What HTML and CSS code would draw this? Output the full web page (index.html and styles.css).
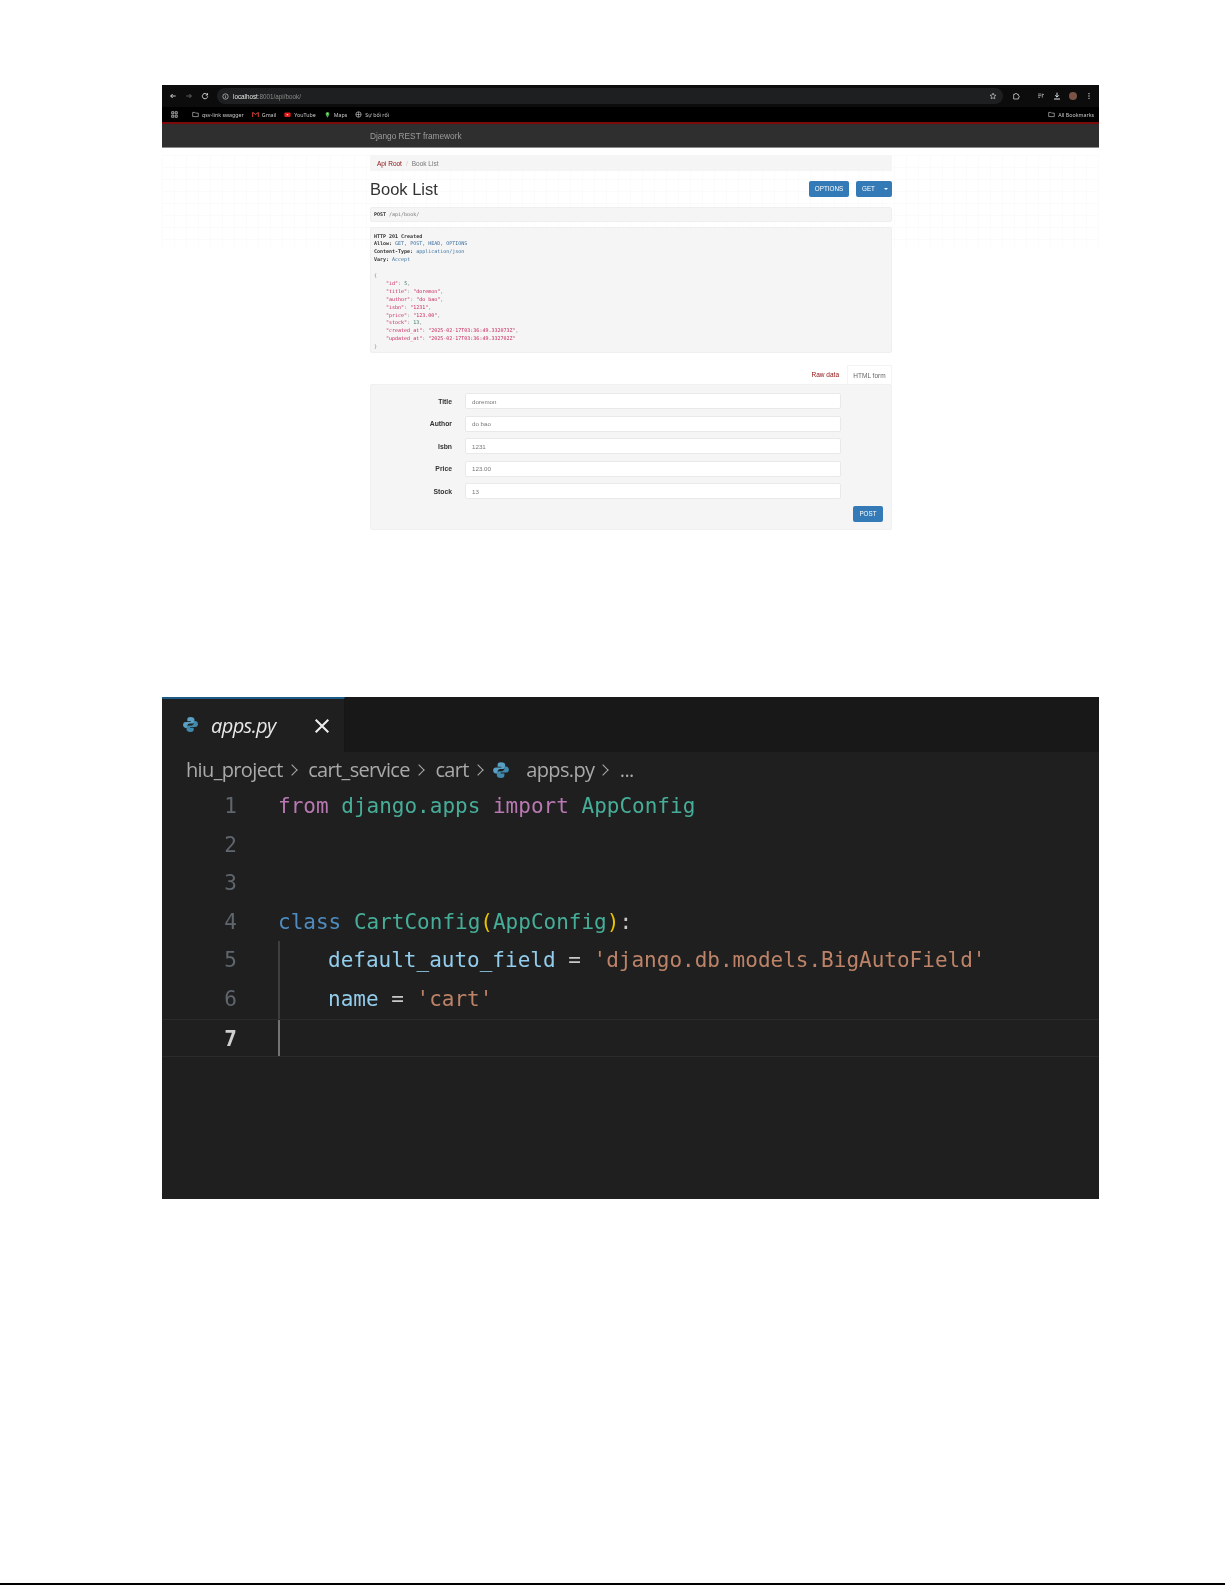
FILE: index.html
```html
<!DOCTYPE html>
<html lang="en">
<head>
<meta charset="utf-8">
<title>Book List and apps.py</title>
<link rel="stylesheet" href="styles.css">
</head>
<body>
<main class="page">
  <section class="browser">
    <div class="toolbar">
      <svg class="ti ti-first" viewBox="0 0 12 12"><path d="M10 6H2.5M5.5 3 2.5 6l3 3" fill="none" stroke="#e8e8e8" stroke-width="1.3"/></svg>
      <svg class="ti" viewBox="0 0 12 12"><path d="M2 6h7.5M6.5 3l3 3-3 3" fill="none" stroke="#6c6c6c" stroke-width="1.3"/></svg>
      <svg class="ti" viewBox="0 0 12 12"><path d="M9.5 4.2A4 4 0 1 0 10 6.5M9.8 1.8v2.8H7" fill="none" stroke="#e4e4e4" stroke-width="1.3"/></svg>
      <div class="omnibox">
        <svg class="info" viewBox="0 0 12 12"><circle cx="6" cy="6" r="4.6" fill="none" stroke="#ddd" stroke-width="1.1"/><path d="M6 5.4v3M6 3.4v1" stroke="#ddd" stroke-width="1.1"/></svg>
        <span class="host">localhost</span><span class="path">:8001/api/book/</span>
        <svg class="star" viewBox="0 0 12 12"><path d="m6 1.6 1.3 3 3.2.3-2.4 2.1.7 3.2L6 8.6l-2.8 1.6.7-3.2-2.4-2.1 3.2-.3z" fill="none" stroke="#ccc" stroke-width="1"/></svg>
      </div>
      <svg class="ti ti-ext" viewBox="0 0 12 12"><path d="M2.5 3.5h2a1.5 1.5 0 0 1 3 0h2v2a1.500 1.500 0 0 1 0 3v2h-7z" fill="none" stroke="#ddd" stroke-width="1.100"/></svg>
      <svg class="ti ti-media" viewBox="0 0 12 12"><path d="M1.500 3h5M1.500 5.500h5M1.500 8h3M8 8.500V3l2.500 1" fill="none" stroke="#bbb" stroke-width="1.100"/></svg>
      <svg class="ti" viewBox="0 0 12 12"><path d="M6 1v6.500M3.300 5 6 7.700 8.700 5M1.500 10.500h9" fill="none" stroke="#f0f0f0" stroke-width="1.400"/></svg>
      <span class="avatar"></span>
      <svg class="ti" viewBox="0 0 12 12"><circle cx="6" cy="2.500" r="1" fill="#ddd"/><circle cx="6" cy="6" r="1" fill="#ddd"/><circle cx="6" cy="9.500" r="1" fill="#ddd"/></svg>
    </div>
    <div class="bookmarks">
      <svg class="bi bi-apps" viewBox="0 0 10 10"><path d="M1 1h3v3H1zM6 1h3v3H6zM1 6h3v3H1zM6 6h3v3H6z" fill="none" stroke="#ddd" stroke-width="1"/></svg>
      <span class="bm bm-first"><svg class="bi" viewBox="0 0 10 10"><path d="M1 2h3l1 1h4v5H1z" fill="none" stroke="#ccc" stroke-width=".9"/></svg>qsv-link swagger</span>
      <span class="bm"><svg class="bi" viewBox="0 0 10 10"><path d="M1 8.500V2l4 3 4-3v6.500" fill="none" stroke="#e0453a" stroke-width="1.400"/></svg>Gmail</span>
      <span class="bm"><svg class="bi" viewBox="0 0 10 10"><rect x=".5" y="2" width="9" height="6.500" rx="1.500" fill="#e01b1b"/><path d="m4 3.800 2.500 1.400L4 6.600z" fill="#fff"/></svg>YouTube</span>
      <span class="bm"><svg class="bi" viewBox="0 0 10 10"><path d="M5 9.500C3 6.800 2.300 5.500 2.300 4a2.700 2.700 0 0 1 5.400 0C7.700 5.500 7 6.800 5 9.500z" fill="#4caf50"/><circle cx="5" cy="3.800" r="1" fill="#fdd835"/></svg>Maps</span>
      <span class="bm"><svg class="bi" viewBox="0 0 10 10"><circle cx="5" cy="5" r="3.800" fill="none" stroke="#ccc" stroke-width="1"/><path d="M1.500 5h7M5 1.200v7.600" stroke="#ccc" stroke-width=".8"/></svg>Sự bối rối</span>
      <span class="bm bm-all"><svg class="bi" viewBox="0 0 10 10"><path d="M1 2h3l1 1h4v5H1z" fill="none" stroke="#ccc" stroke-width=".9"/></svg>All Bookmarks</span>
    </div>
    <div class="navbar"><span class="brand">Django REST framework</span></div>
    <div class="canvas">
      <div class="column">
        <div class="crumbs"><a class="link">Api Root</a><span class="sep">/</span><span>Book List</span></div>
        <div class="heading">
          <h1>Book List</h1>
          <button class="btn btn-options">OPTIONS</button>
          <div class="btn btn-get"><span>GET</span><span class="split"><i class="caret"></i></span></div>
        </div>
        <div class="request"><b>POST</b> <span class="dim">/api/book/</span></div>
        <pre class="response"><b>HTTP 201 Created</b>
<b>Allow:</b> <span class="hv">GET, POST, HEAD, OPTIONS</span>
<b>Content-Type:</b> <span class="hv">application/json</span>
<b>Vary:</b> <span class="hv">Accept</span>

<span class="pl">{</span>
    <span class="str">"id"</span><span class="pl">:</span> <span class="num">5</span><span class="pl">,</span>
    <span class="str">"title"</span><span class="pl">:</span> <span class="str">"doremon"</span><span class="pl">,</span>
    <span class="str">"author"</span><span class="pl">:</span> <span class="str">"do bao"</span><span class="pl">,</span>
    <span class="str">"isbn"</span><span class="pl">:</span> <span class="str">"1231"</span><span class="pl">,</span>
    <span class="str">"price"</span><span class="pl">:</span> <span class="str">"123.00"</span><span class="pl">,</span>
    <span class="str">"stock"</span><span class="pl">:</span> <span class="num">13</span><span class="pl">,</span>
    <span class="str">"created_at"</span><span class="pl">:</span> <span class="str">"2025-02-17T03:36:49.332073Z"</span><span class="pl">,</span>
    <span class="str">"updated_at"</span><span class="pl">:</span> <span class="str">"2025-02-17T03:36:49.332702Z"</span>
<span class="pl">}</span></pre>
        <div class="tabs"><a class="link tab-raw">Raw data</a><span class="tab-active">HTML form</span></div>
        <form class="panel">
          <div class="row"><label>Title</label><div class="input">doremon</div></div>
          <div class="row"><label>Author</label><div class="input">do bao</div></div>
          <div class="row"><label>Isbn</label><div class="input">1231</div></div>
          <div class="row"><label>Price</label><div class="input">123.00</div></div>
          <div class="row"><label>Stock</label><div class="input">13</div></div>
          <div class="actions"><span class="btn btn-post">POST</span></div>
        </form>
      </div>
    </div>
  </section>

  <section class="editor">
    <div class="tabbar">
      <div class="filetab">
        <svg class="py py-tab" viewBox="0 0 16 16"><path d="M8 1C5.500 1 5 2 5 3.200V5h3.300v.7H3.400C2 5.700 1 6.800 1 8.300c0 1.700 1 2.900 2.400 2.900H5V9.300c0-1.300 1-2.300 2.300-2.300h2.600c1 0 1.800-.8 1.800-1.900V3.200C11.700 2 10.500 1 8 1z" fill="#5aa0c4"/><path d="M8 15c2.500 0 3-1 3-2.200V11H7.700v-.7h4.900c1.400 0 2.400-1.100 2.400-2.600 0-1.700-1-2.900-2.400-2.900H11v1.900C11 8 10 9 8.700 9H6.100c-1 0-1.800.8-1.800 1.900v1.900C4.300 14 5.500 15 8 15z" fill="#3f89ad"/></svg>
        <span class="fname">apps.py</span>
        <svg class="close" viewBox="0 0 14 14"><path d="m1.500 1.500 11 11M12.500 1.500l-11 11" stroke="#eee" stroke-width="1.800"/></svg>
      </div>
    </div>
    <div class="path-bar">
      <span>hiu_project</span><i class="chev"></i><span>cart_service</span><i class="chev"></i><span>cart</span><i class="chev"></i>
      <svg class="py py-crumb" viewBox="0 0 16 16"><path d="M8 1C5.500 1 5 2 5 3.200V5h3.300v.7H3.400C2 5.700 1 6.800 1 8.300c0 1.700 1 2.900 2.400 2.900H5V9.300c0-1.300 1-2.300 2.300-2.300h2.600c1 0 1.800-.8 1.800-1.900V3.200C11.700 2 10.500 1 8 1z" fill="#5aa0c4"/><path d="M8 15c2.500 0 3-1 3-2.200V11H7.700v-.7h4.900c1.400 0 2.400-1.100 2.400-2.600 0-1.700-1-2.900-2.400-2.900H11v1.900C11 8 10 9 8.700 9H6.100c-1 0-1.800.8-1.800 1.900v1.900C4.300 14 5.500 15 8 15z" fill="#3f89ad"/></svg>
      <span>apps.py</span><i class="chev"></i><span>...</span>
    </div>
    <div class="code">
      <div class="line"><span class="ln">1</span><span class="src"><span class="kw">from</span> <span class="ty">django.apps</span> <span class="kw">import</span> <span class="ty">AppConfig</span></span></div>
      <div class="line"><span class="ln">2</span><span class="src"></span></div>
      <div class="line"><span class="ln">3</span><span class="src"></span></div>
      <div class="line"><span class="ln">4</span><span class="src"><span class="st">class</span> <span class="ty">CartConfig</span><span class="br">(</span><span class="ty">AppConfig</span><span class="br">)</span><span class="op">:</span></span></div>
      <div class="line"><span class="ln">5</span><span class="src guide"><span class="va">default_auto_field</span> <span class="op">=</span> <span class="sg">'django.db.models.BigAutoField'</span></span></div>
      <div class="line"><span class="ln">6</span><span class="src guide"><span class="va">name</span> <span class="op">=</span> <span class="sg">'cart'</span></span></div>
      <div class="line line-active"><span class="ln">7</span><span class="src guide guide-active"></span></div>
    </div>
  </section>
  <div class="rule"></div>
</main>
</body>
</html>
```
FILE: styles.css
```css
* { box-sizing: border-box; }
html, body { margin: 0; padding: 0; background: #fff; }
.page {
  height: 1585px;
  display: flex;
  flex-direction: column;
  padding-top: 85px;
  font-family: "Liberation Sans", Arial, sans-serif;
}
.browser, .editor { margin-left: 162px; width: 937px; }
.browser { filter: blur(.35px); }
.editor { filter: blur(.4px); }

/* Chrome toolbar */
.toolbar {
  height: 22px;
  background: #0c0c0c;
  display: flex;
  align-items: center;
  padding-left: 7px;
  gap: 8px;
}
.ti { width: 8px; height: 8px; flex: none; }
.omnibox {
  height: 16px;
  width: 786px;
  margin-right: 1px;
  border-radius: 8px;
  background: #1e1f20;
  display: flex;
  align-items: center;
  padding: 0 6px 0 5px;
  font-size: 6.300px;
}
.info { width: 7px; height: 7px; margin-right: 4px; }
.host { color: #e6e6e6; }
.path { color: #8a8a8a; }
.star { width: 8px; height: 8px; margin-left: auto; }
.ti-ext { margin-right: 9px; }
.avatar { width: 8px; height: 8px; border-radius: 50%; background: #7a5346; flex: none; }

.bookmarks {
  height: 15px;
  background: #000;
  display: flex;
  align-items: center;
  padding: 0 5px 0 9px;
  color: #c9c9c9;
  font-size: 5.300px;
  font-family: "Noto Sans", sans-serif;
}
.bi { width: 7px; height: 7px; margin-right: 3px; flex: none; }
.bi-apps { margin-right: 0; }
.bm { display: flex; align-items: center; margin-left: 8px; white-space: nowrap; }
.bm-first { margin-left: 14px; }
.bm-all { margin-left: auto; }

.navbar {
  height: 26px;
  background: #2f2f2f;
  border-top: 2px solid #7d0a0a;
  border-bottom: 1px solid #8a8a8a;
  padding-left: 208px;
  display: flex;
  align-items: center;
}
.brand { color: #9d9d9d; font-size: 8.300px; }

/* DRF page */
.canvas {
  height: 387px;
  padding-left: 208px;
  background:
    linear-gradient(#fff, #fff) 0 92px no-repeat,
    linear-gradient(#fbfbfb 1px, transparent 1px) 0 0 / 12px 12px,
    linear-gradient(90deg, #fbfbfb 1px, transparent 1px) 0 0 / 12px 12px,
    #fff;
}
.column { width: 522px; }
.crumbs {
  margin-top: 7px;
  height: 16px;
  background: #f5f5f5;
  display: flex;
  align-items: center;
  padding-left: 7px;
  font-size: 6.500px;
  color: #777;
}
.link { color: #8b0f0f; }
.sep { color: #ccc; margin: 0 4px; }
.heading {
  height: 35px;
  display: flex;
  align-items: center;
  gap: 7px;
}
h1 {
  margin: 1px auto 0 0;
  font-weight: 400;
  font-size: 16.500px;
  color: #333;
}
.btn {
  height: 16px;
  border: 0;
  border-radius: 2px;
  background: #337ab7;
  color: #fff;
  font-size: 6.300px;
  font-family: "Liberation Sans", Arial, sans-serif;
  display: flex;
  align-items: center;
  justify-content: center;
  padding: 0;
}
.btn-options { width: 40px; }
.btn-get { width: 36px; justify-content: flex-start; padding-left: 6px; }
.split { margin-left: auto; width: 13px; height: 100%; display: flex; align-items: center; justify-content: center; }
.caret { border: 2px solid transparent; border-top-color: #fff; border-bottom: 0; }
.request {
  height: 15px;
  margin-top: 1px;
  background: #f5f5f5;
  border: 1px solid #efefef;
  border-radius: 2px;
  padding-left: 3px;
  font: 5px/13px "DejaVu Sans Mono", monospace;
  color: #333;
}
.dim { color: #777; }
.response {
  margin: 5px 0 0;
  height: 126px;
  background: #f5f5f5;
  border: 1px solid #efefef;
  border-radius: 2px;
  padding: 4.500px 0 0 3px;
  font: 5px/7.900px "DejaVu Sans Mono", monospace;
  color: #333;
}
.hv { color: #3b6f9e; }
.pl { color: #8a8a8a; }
.str { color: #c7275a; }
.num { color: #3b7a6a; }
.tabs {
  height: 19px;
  margin-top: 12px;
  display: flex;
  justify-content: flex-end;
  align-items: center;
  font-size: 6.500px;
}
.tab-raw { margin-right: 8px; }
.tab-active {
  height: 100%;
  width: 45px;
  background: #fff;
  border: 1px solid #f4f4f4;
  border-bottom: 0;
  display: flex;
  align-items: center;
  justify-content: center;
  color: #666;
}
.panel {
  height: 146px;
  background: #f5f5f5;
  border: 1px solid #f0f0f0;
  border-radius: 2px;
  padding-top: 8px;
  display: flex;
  flex-direction: column;
  gap: 6.600px;
}
.row { display: flex; align-items: center; height: 16px; }
label {
  width: 81px;
  text-align: right;
  font-size: 6.800px;
  font-weight: 700;
  color: #333;
  margin-right: 13px;
}
.input {
  width: 376px;
  height: 16px;
  background: #fff;
  border: 1px solid #e9e9e9;
  border-radius: 2px;
  display: flex;
  align-items: center;
  padding-left: 6px;
  font-size: 6.200px;
  color: #777;
}
.actions { display: flex; justify-content: flex-end; padding: 0 8px 0 0; }
.btn-post { width: 30px; }

/* VS Code */
.editor {
  margin-top: 155px;
  height: 502px;
  background: #1f1f1f;
  display: flex;
  flex-direction: column;
}
.tabbar { height: 55px; background: #181818; flex: none; }
.filetab {
  width: 183px;
  height: 100%;
  background: #1f1f1f;
  border-top: 2px solid #1d5a86;
  border-right: 1px solid #161616;
  display: flex;
  align-items: center;
  padding-left: 20px;
}
.py-tab { width: 17px; height: 17px; margin-top: -3px; }
.fname {
  margin: 0 0 0 12px;
  font: italic 20px "Open Sans", sans-serif;
  color: #e8e8e8;
  letter-spacing: -.6px;
}
.close { width: 16px; height: 16px; margin-left: 38px; }
.path-bar {
  height: 35px;
  flex: none;
  display: flex;
  align-items: center;
  padding-left: 24px;
  font: 20px "Open Sans", sans-serif;
  letter-spacing: -.65px;
  color: #a9a9a9;
}
.chev {
  width: 8px;
  height: 8px;
  margin: 0 12.500px 0 5px;
  border-top: 1.500px solid #a9a9a9;
  border-right: 1.500px solid #a9a9a9;
  transform: rotate(45deg);
}
.py-crumb { width: 18px; height: 18px; margin: 0 16px 0 -2px; }
.code { font: 21px/38.600px "DejaVu Sans Mono", monospace; }
.line { display: flex; height: 38.600px; }
.line-active { border-top: 1px solid #2b2b2b; border-bottom: 1px solid #2b2b2b; }
.ln { width: 75px; text-align: right; color: #5f666d; flex: none; }
.line-active .ln { color: #cfcfcf; font-weight: 700; }
.src { margin-left: 41px; white-space: pre; }
.guide { border-left: 2px solid #3f3f3f; padding-left: 48px; }
.guide-active { border-left-color: #737373; }
.kw { color: #b878b2; }
.ty { color: #46ad98; }
.st { color: #4f8cc0; }
.br { color: #e6c200; }
.op { color: #c8c8c8; }
.va { color: #93cdec; }
.sg { color: #bd8368; }

.rule { margin-top: auto; height: 2px; background: #000; }
```
